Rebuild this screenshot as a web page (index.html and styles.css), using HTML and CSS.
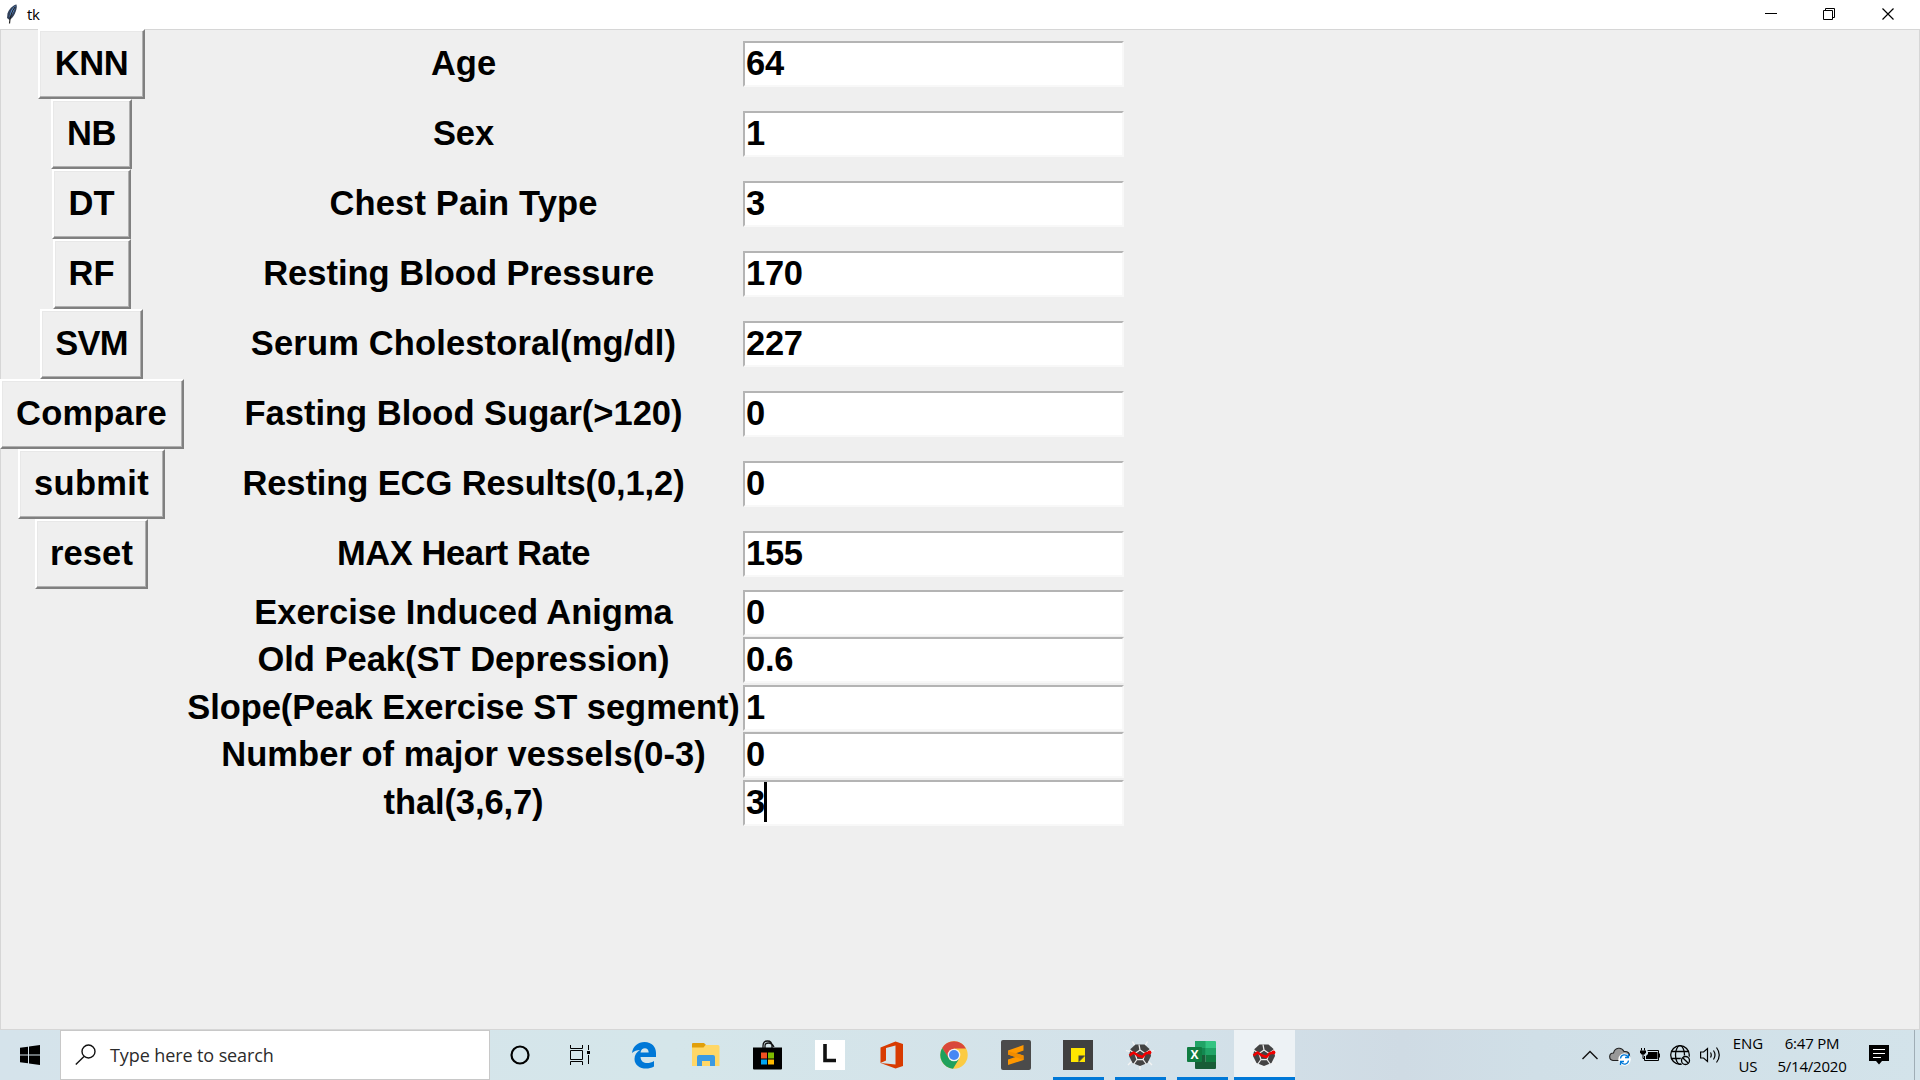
FILE: index.html
```html
<!DOCTYPE html>
<html lang="en">
<head>
<meta charset="utf-8">
<title>tk</title>
<link rel="stylesheet" href="styles.css">
</head>
<body>
<svg width="0" height="0" class="defs">
  <symbol id="spyder" viewBox="0 0 30 30">
    <path d="M10 6L7.500 1.500M20 6L22.500 1.500M24 12L29 10.500M23 21L27 25M15 25V29.500M7 21L3 25M6 12L1 10.500" stroke="#f4f4f4" stroke-width="1.300"/>
    <path d="M10.500 4.500h9l5 4.500 1.500 7-3.500 7-7.500 3-7.500-3-3.500-7 1.500-7z" fill="#434343"/>
    <path d="M15 10l5 3.500-2 6h-6l-2-6zM15 10l-1-5.500M20 13.500l5.500-4M18 19.500l3.500 5M12 19.500l-3.500 5M10 13.500L4.500 10" fill="none" stroke="#e8e8e8" stroke-width="1.300"/>
    <path d="M15 11.200l4 2.800-1.600 4.700h-4.800L11 14z" fill="#434343"/>
    <path d="M4.500 15.500L8.500 12.500 13 15.500 17.500 17 20.500 13.500 24.500 12.500" fill="none" stroke="#f00000" stroke-width="2.600" stroke-linejoin="round"/><circle cx="24.500" cy="12.500" r="1.900" fill="#f00000"/>
  </symbol>
</svg>
<header class="titlebar">
  <svg class="feather" width="12" height="20" viewBox="0 0 12 20"><path d="M10.500.5C7 1 3 5 1.500 9.500L1 14l2.500 2C7 14 10 9 10.800 3z" fill="#31405a"/><path d="M9.500 1.500C6 4 4 8 3.500 13 7 10 9 6 9.500 1.500z" fill="#5f96dc"/><path d="M9 3C6 7 4 12 3.500 19.500" fill="none" stroke="#222" stroke-width="1.200"/></svg>
  <span class="caption">tk</span>
  <svg class="window-controls" width="140" height="29" viewBox="0 0 140 29" fill="none" stroke="#000" stroke-width="1"><path d="M5 13.500h12"/><path d="M63.500 10.500h9v9h-9zM65.500 10.500v-2h9v9h-2" /><path d="M122.500 8.500l11 11M133.500 8.500l-11 11" stroke-width="1.200"/></svg>
</header>
<main class="client">
  <div class="form">
    <button class="w-knn">KNN</button><label>Age</label><div class="entry">64</div>
    <button class="w-nb">NB</button><label class="tight">Sex</label><div class="entry">1</div>
    <button class="w-dt">DT</button><label class="loose">Chest Pain Type</label><div class="entry">3</div>
    <button class="w-rf">RF</button><label class="trailing">Resting Blood Pressure </label><div class="entry">170</div>
    <button class="w-svm">SVM</button><label class="loose">Serum Cholestoral(mg/dl)</label><div class="entry">227</div>
    <button class="w-compare">Compare</button><label>Fasting Blood Sugar(&gt;120)</label><div class="entry">0</div>
    <button class="w-submit">submit</button><label class="tight">Resting ECG Results(0,1,2)</label><div class="entry">0</div>
    <button class="w-reset">reset</button><label class="tighter">MAX Heart Rate</label><div class="entry">155</div>
    <label>Exercise Induced Anigma</label><div class="entry">0</div>
    <label>Old Peak(ST Depression)</label><div class="entry">0.6</div>
    <label class="slope">Slope(Peak Exercise ST segment)</label><div class="entry">1</div>
    <label class="vessels">Number of major vessels(0-3)</label><div class="entry">0</div>
    <label class="tight">thal(3,6,7)</label><div class="entry">3<span class="caret"></span></div>
  </div>
</main>
<footer class="taskbar">
  <div class="start"><svg width="20" height="20" viewBox="0 0 20 20"><path d="M0 2.800L8 1.700V9.500H0zM9 1.500L20 0V9.500H9zM0 10.500H8v7.800L0 17.200zM9 10.500H20V20L9 18.500z"/></svg></div>
  <div class="search"><svg width="22" height="22" viewBox="0 0 22 22" fill="none" stroke="#111" stroke-width="1.400"><circle cx="13.500" cy="7.500" r="6.500"/><path d="M9 12.500L.8 20.500"/></svg><span>Type here to search</span></div>
  <div class="cell narrow"><svg width="20" height="20" viewBox="0 0 20 20"><circle cx="10" cy="10" r="8.500" fill="none" stroke="#000" stroke-width="2.200"/></svg></div>
  <div class="cell taskview"><svg width="20" height="20" viewBox="0 0 20 20" fill="none" stroke="#000" stroke-width="1"><path d="M.5 0v3.500h12V0M.5 5.500h12v9H.5zM.5 20v-3.500h12V20M18.500 0v5M18.500 10v9"/><path d="M17 6h3v3h-3z" fill="#000" stroke="none"/></svg></div>
  <div class="cell"><svg width="26" height="28" viewBox="0 0 26 28"><path d="M1 12C2 5 7 1 13.500 1 21 1 25 6 25 12v4H9.500c.5 7 8 7.500 13.500 4v5.500C15 30 3.500 27 3.500 18c0-4 2-7 5.500-9-3 .3-6 .9-8 3zM9.500 11.500h8.200C17.700 5.500 10 6 9.500 11.500z" fill="#0078d7"/></svg></div>
  <div class="cell"><svg width="28" height="24" viewBox="0 0 28 24"><path d="M0 1q0-1 1-1h11l2 2v4H0z" fill="#e19f0b"/><path d="M0 4.500h11.500l2-2.500H26q1.500 0 1.500 1.500V23H0z" fill="#ffd766"/><path d="M5 23v-9q0-2 2-2h14q2 0 2 2v9h-5v-5H10v5z" fill="#3b9ae2"/></svg></div>
  <div class="cell"><svg width="30" height="30" viewBox="0 0 30 30"><path d="M10 8V6q0-5 4.500-5T19 6v2M12 8V6q0-3 3.500-3T21 7" fill="none" stroke="#111" stroke-width="1.300"/><path d="M0 7.500h29v21q0 1-1 1H1q-1 0-1-1z"/><path d="M8 12.500h6v6H8z" fill="#f25022"/><path d="M15 12.500h6v6h-6z" fill="#7fba00"/><path d="M8 19.500h6v5H8z" fill="#00a4ef"/><path d="M15 19.500h6v5h-6z" fill="#ffb900"/></svg></div>
  <div class="cell"><svg width="30" height="30" viewBox="0 0 30 30"><path d="M0 0h30v30H0z" fill="#fff"/><path d="M10 4v16.500h11" fill="none" stroke="#111" stroke-width="3.600"/></svg></div>
  <div class="cell"><svg width="24" height="28" viewBox="0 0 24 28"><path d="M.5 6.500L15.500.5 23 3v22l-7.500 2.500L.5 22l15 1.500V4.500L6 7v12.500L.5 22z" fill="#d83b01"/></svg></div>
  <div class="cell"><svg width="28" height="28" viewBox="0 0 28 28"><circle cx="14" cy="14" r="13.700" fill="#fbcb43"/><path d="M14 7.500H26A13.700 13.700 0 0 0 2.200 7L8.500 17.500z" fill="#d9483b"/><path d="M2.200 7A13.700 13.700 0 0 0 13 27.700L19 18 9 17.500z" fill="#1fa15d"/><circle cx="14" cy="14" r="6.300" fill="#f3f3f3"/><circle cx="14" cy="14" r="5" fill="#4587f4"/></svg></div>
  <div class="cell"><svg width="30" height="30" viewBox="0 0 30 30"><rect width="30" height="30" rx="2" fill="#4b4b4b"/><path d="M7 10.500L22.500 5v5.500L15 13.300l7.500 2.200V20L7 25v-5.500l7.500-2.500L7 14.500z" fill="#ff9800"/><path d="M7 14.500V11l15.500 4.500V20z" fill="#f08c00"/></svg></div>
  <div class="cell open"><svg width="30" height="30" viewBox="0 0 30 30"><path d="M0 0h30v30H0z" fill="#404040"/><path d="M8 8h14v7.500L15.500 22H8z" fill="#ffe600"/><path d="M15.500 15.500H22L15.500 22z" fill="#404040"/><path d="M22 16v6h-6z" fill="#ffe600"/></svg></div>
  <div class="cell open"><svg width="30" height="30"><use href="#spyder"/></svg></div>
  <div class="cell open"><svg width="30" height="28" viewBox="0 0 30 28"><path d="M8 0h11v14H8z" fill="#21a366"/><path d="M18.500 0H28q1 0 1 1v6H18.500z" fill="#33c481"/><path d="M8 7h10.500v7H8z" fill="#138750"/><path d="M18.500 7H29v7H18.500z" fill="#21a366"/><path d="M18.500 14H29v7H18.500z" fill="#107c41"/><path d="M8 14h10.500v7H29v6q0 1-1 1H9q-1 0-1-1z" fill="#185c37"/><rect y="6" width="15" height="15" rx="1" fill="#107c41"/><text x="7.500" y="18" text-anchor="middle" class="excel-x">X</text></svg></div>
  <div class="cell open active"><svg width="30" height="30"><use href="#spyder"/></svg></div>
  <div class="tray">
    <div class="tray-icon"><svg width="16" height="10" viewBox="0 0 16 10" fill="none" stroke="#111" stroke-width="1.400"><path d="M.5 9L8 1.500 15.500 9"/></svg></div>
    <div class="tray-icon cloud"><svg width="22" height="20" viewBox="0 0 22 20"><path d="M4 14.500C-.5 14-.5 7 4.500 7 6 1.500 12.500.5 15 5.500c4-.5 6 2 5.500 5.500l-2 3.500z" fill="#999" stroke="#222" stroke-width="1.100"/><circle cx="15.500" cy="13.500" r="6.200" fill="#fff"/><path d="M11.500 12.500a4 4 0 0 1 7.500-1.500M19.500 14.500a4 4 0 0 1-7.500 1.500M19.500 8v3.500H16M11.500 19v-3.500H15" fill="none" stroke="#0078d7" stroke-width="1.300"/></svg></div>
    <div class="tray-icon"><svg width="20" height="14" viewBox="0 0 20 14"><path d="M7.500 2.500h11v10h-14V8" fill="none" stroke="#000"/><path d="M8 4h9.500v7H6V8l2-2zM19 5.500h1v4h-1z"/><path d="M1.500 0v2.500M4.500 0v2.500M3 6v4.500h1.500" fill="none" stroke="#000"/><path d="M0 2.500h6v2L4.500 6.500h-3L0 4.500z"/></svg></div>
    <div class="tray-icon"><svg width="21" height="21" viewBox="0 0 21 21" fill="none" stroke="#000" stroke-width="1.300"><circle cx="10" cy="10" r="9.300"/><ellipse cx="10" cy="10" rx="4.500" ry="9.300"/><path d="M1 6.500h18M1 13.500h11"/><circle cx="15.500" cy="15.500" r="5.200" fill="#d3e3ea" stroke="none"/><circle cx="15.500" cy="15.500" r="4"/><path d="M12.700 12.700l5.600 5.600"/></svg></div>
    <div class="tray-icon"><svg width="21" height="18" viewBox="0 0 21 18" fill="none" stroke="#000" stroke-width="1.200"><path d="M.6 6h3L7.500 2.500v13L3.600 12h-3zM10.500 6.500q1.500 2.500 0 5M13.500 4.500q3 4.500 0 9M16.500 1.500q5.500 7.500 0 15"/></svg></div>
    <div class="lang"><span>ENG</span><span>US</span></div>
    <div class="clock"><span class="time">6:47 PM</span><span class="date">5/14/2020</span></div>
    <div class="notify"><svg width="20" height="20" viewBox="0 0 20 20"><path d="M0 0h20v16h-7l-3 3.500L7 16H0z"/><path d="M4 4.500h12M4 8.500h12M4 12.500h8" stroke="#fff" stroke-width="1"/></svg></div>
    <div class="show-desktop"></div>
  </div>
</footer>
</body>
</html>
```
FILE: styles.css
```css
* { box-sizing: border-box; }
body {
  margin: 0;
  width: 1920px;
  height: 1080px;
  overflow: hidden;
  display: flex;
  flex-direction: column;
  background: #f0f0f0;
  color: #000;
}
svg { display: block; flex: none; }
.defs { position: absolute; }
.titlebar {
  height: 29px;
  flex: none;
  display: flex;
  background: #fff;
  font: 15px "Open Sans", sans-serif;
}
.feather { margin: 4px 8px 0 6px; }
.caption { line-height: 29px; letter-spacing: -0.4px; margin-left: 1px; }
.window-controls { margin-left: auto; margin-right: 20px; }
.client {
  flex: 1;
  background: #efefef;
  border: 1px solid #d6d6d6;
  border-top: 0;
  box-shadow: inset 0 1px #d6d6d6;
}
.form {
  display: grid;
  grid-template-columns: 183px 560px 381px;
  grid-template-rows: repeat(8, 70px) repeat(5, 47.5px);
  align-items: center;
  justify-items: center;
  margin-left: -1px;
  font: bold 34.5px "Liberation Sans", Arial, sans-serif;
}
button {
  height: 70px;
  padding: 0 0 2px;
  font: inherit;
  color: #000;
  background: #efefef;
  border: 2px solid;
  border-color: #fff #808080 #808080 #fff;
  box-shadow: inset -1px -1px #b0b0b0, inset 1px 1px #e8e8e8;
}
.w-knn { width: 107px; letter-spacing: -0.4px; }
.w-nb { width: 81px; letter-spacing: -0.3px; }
.w-dt { width: 79px; }
.w-rf { width: 78px; }
.w-svm { width: 103px; letter-spacing: -0.8px; }
.w-compare { width: 184px; letter-spacing: 0.2px; }
.w-submit { width: 147px; letter-spacing: 0.3px; }
.w-reset { width: 113px; letter-spacing: 0.1px; }
label { grid-column: 2; white-space: nowrap; line-height: 46px; padding: 0 0 2px 1px; }
.tight { letter-spacing: -0.1px; }
.tighter { letter-spacing: -0.4px; }
.loose { letter-spacing: 0.15px; }
.slope { letter-spacing: -0.05px; }
.vessels { letter-spacing: 0.05px; }
.trailing { white-space: pre; }
.entry {
  width: 381px;
  height: 46px;
  display: flex;
  align-items: center;
  padding: 0 0 2px 1px;
  line-height: 40px;
  letter-spacing: -0.3px;
  background: #fff;
  border: 2px solid;
  border-color: #b4b4b4 #f8f8f8 #f8f8f8 #b4b4b4;
}
.caret { width: 3px; height: 40px; background: #000; margin-left: -1px; }
.taskbar {
  height: 50px;
  flex: none;
  display: flex;
  background: linear-gradient(90deg, #d5e3eb, #d5e6ea 35%, #d3e1e9 62%, #cfdbe4 73%, #d0dfe7 80%, #d3e3ea);
  font-family: "Open Sans", "Noto Sans", sans-serif;
}
.start { width: 60px; display: flex; align-items: center; justify-content: center; }
.search {
  width: 430px;
  display: flex;
  align-items: center;
  padding-left: 14px;
  background: #fff;
  border: 1px solid #c8c8c8;
  font-size: 18px;
  color: #2b2b2b;
}
.search span { margin-left: 13px; letter-spacing: -0.1px; }
.cell { width: 62px; display: flex; align-items: center; justify-content: center; border-bottom: 3px solid transparent; padding-top: 3px; }
.narrow { width: 60px; }
.taskview { width: 63px; padding-right: 3px; }
.open { width: 51px; margin: 0 5px 0 6px; padding-right: 1px; border-color: #0078d7; }
.active { width: 61px; margin: 0 0 0 1px; background: #edf2f5; }
.excel-x { font: bold 12px "Open Sans", sans-serif; fill: #fff; }
.tray { margin-left: auto; display: flex; }
.tray-icon { width: 30px; display: flex; align-items: center; justify-content: center; }
.cloud { padding-top: 2px; }
.lang, .clock { display: flex; flex-direction: column; align-items: center; font-size: 15px; line-height: 22.5px; padding-top: 2px; }
.lang { width: 46px; }
.clock { width: 82px; letter-spacing: -0.2px; }
.notify { width: 52px; display: flex; align-items: center; justify-content: center; }
.show-desktop { width: 6px; margin-left: 9px; border-left: 1px solid #9fadb5; }
```
